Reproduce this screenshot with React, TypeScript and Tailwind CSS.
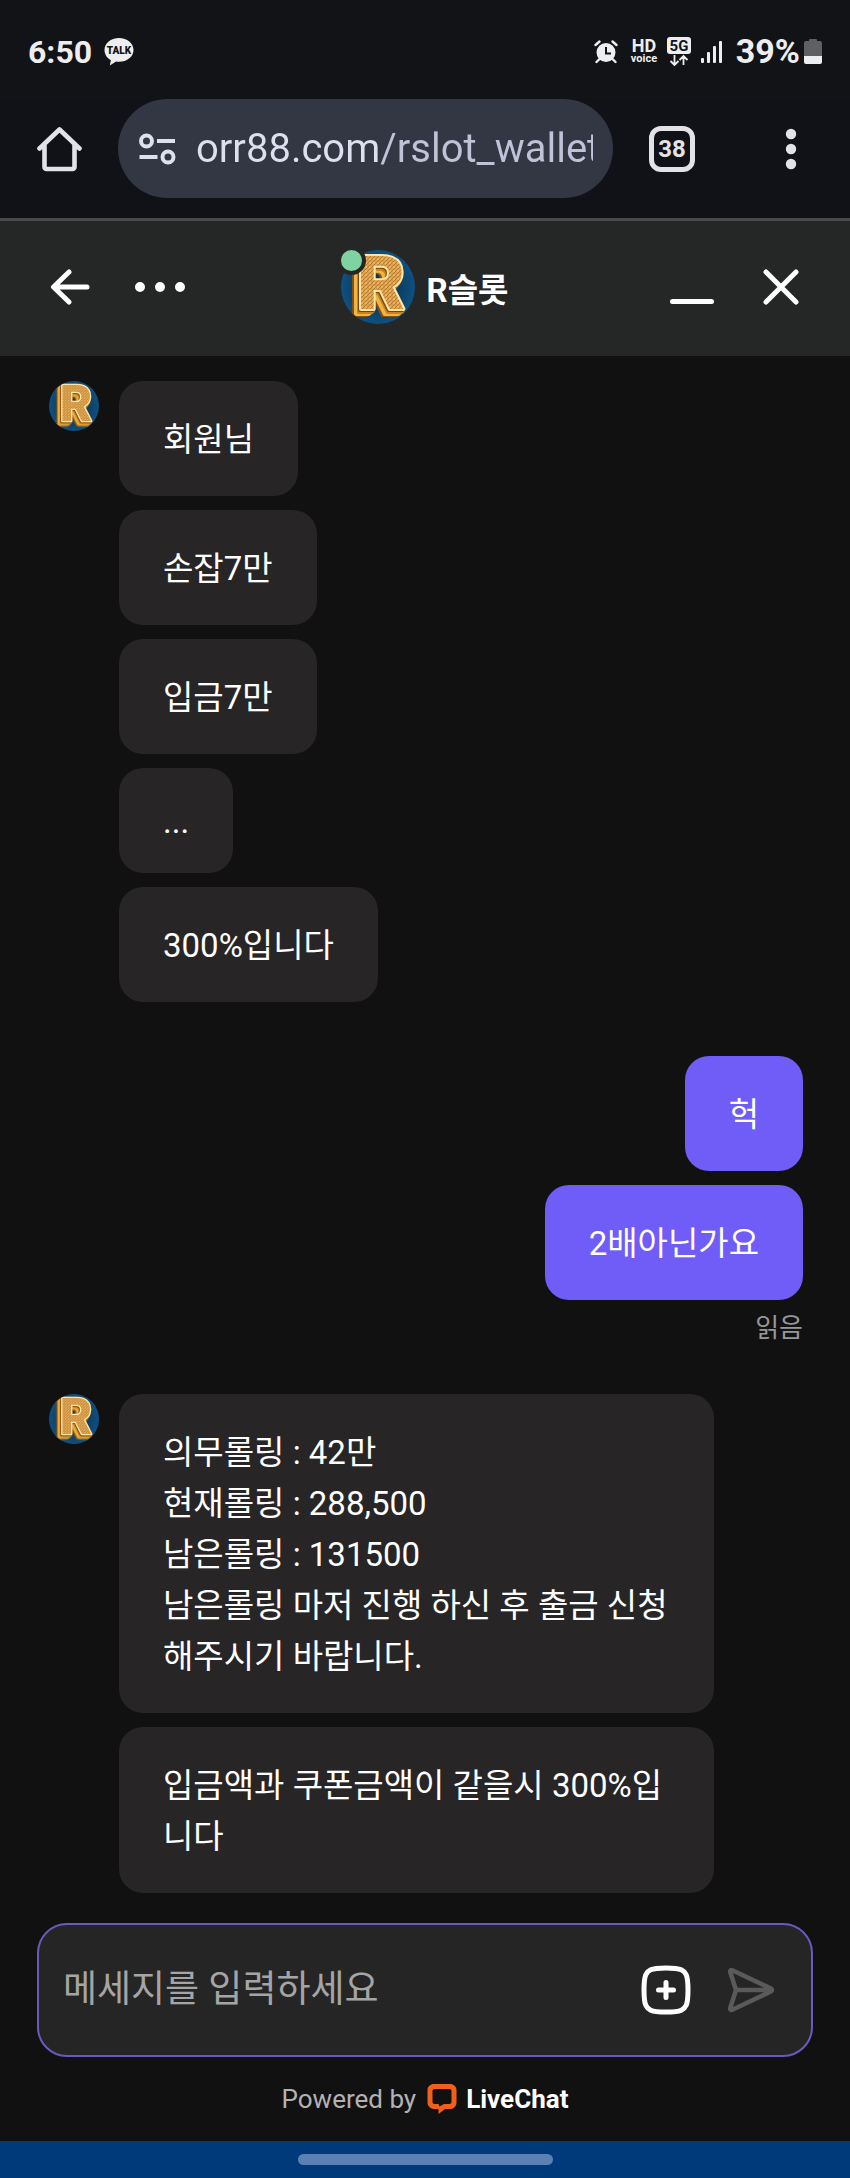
import { ReactNode, useId } from 'react'
import clsx from 'clsx'

type ChatMessage = { id: number; text: string }

const greetingMessages: ChatMessage[] = [
  { id: 1, text: '회원님' },
  { id: 2, text: '손잡7만' },
  { id: 3, text: '입금7만' },
  { id: 4, text: '...' },
  { id: 5, text: '300%입니다' },
]

const visitorMessages: ChatMessage[] = [
  { id: 6, text: '헉' },
  { id: 7, text: '2배아닌가요' },
]

const rollingMessages: ChatMessage[] = [
  {
    id: 8,
    text: '의무롤링 : 42만\n현재롤링 : 288,500\n남은롤링 : 131500\n남은롤링 마저 진행 하신 후 출금 신청해주시기 바랍니다.',
  },
  { id: 9, text: '입금액과 쿠폰금액이 같을시 300%입니다' },
]

export default function App() {
  return (
    <div className="flex min-h-screen flex-col bg-[#121112] font-['Roboto','Noto_Sans_CJK_KR',sans-serif] text-white">
      <StatusBar />
      <BrowserBar />
      <ChatHeader />
      <main className="flex-1 pt-[25px]">
        <AgentGroup messages={greetingMessages} />
        <VisitorGroup messages={visitorMessages} />
        <AgentGroup messages={rollingMessages} />
      </main>
      <Composer />
      <PoweredBy />
      <div className="flex h-[37px] items-center justify-center bg-[#003a7a]">
        <div className="h-[11px] w-[30%] rounded-full bg-[#5b80b4]" />
      </div>
    </div>
  )
}

function StatusBar() {
  return (
    <div className="flex h-[99px] items-center justify-between bg-[#111317] pt-1 pr-7 pl-7 text-[32px] font-bold text-[#eeeef0]">
      <div className="flex items-center gap-3">
        <span>6:50</span>
        <svg className="h-7 w-[30px]" viewBox="0 0 30 28">
          <path
            fill="#eeeef0"
            d="M15 0C6.800 0 .500 5.400.500 12c0 4.300 2.500 8 6.400 10.200L5.800 27.600l6.300-4c1 .2 1.900.2 2.900.2 8.200 0 14.500-5.200 14.500-11.800S23.200 0 15 0Z"
          />
          <text
            x="15"
            y="16"
            textAnchor="middle"
            className="text-[10px] font-black"
            fill="#111317"
          >
            TALK
          </text>
        </svg>
      </div>
      <div className="flex items-center">
        <AlarmIcon />
        <svg className="ml-3 h-9 w-7" viewBox="0 0 28 36" fill="#eeeef0">
          <text x="14" y="18" textAnchor="middle" className="text-[18px]">
            HD
          </text>
          <text x="14" y="28" textAnchor="middle" className="text-[11px]">
            voice
          </text>
        </svg>
        <NetworkIcon />
        <svg className="ml-2 h-6 w-6" viewBox="0 0 24 24" fill="#eeeef0">
          <rect x="1" y="18" width="3" height="5" rx="1" />
          <rect x="7" y="12" width="3" height="11" rx="1" />
          <rect x="13" y="6" width="3" height="17" rx="1" />
          <rect x="19" y="1" width="3" height="22" rx="1" />
        </svg>
        <span className="ml-3 text-[34px]">39%</span>
        <svg className="ml-1 h-[26px] w-[18px]" viewBox="0 0 18 26">
          <path
            fill="#5f6063"
            d="M5 1a1 1 0 0 1 1-1h6a1 1 0 0 1 1 1v1h3a2 2 0 0 1 2 2v14H0V4a2 2 0 0 1 2-2h3Z"
          />
          <path fill="#eeeef0" d="M0 17h18v6a2 2 0 0 1-2 2H2a2 2 0 0 1-2-2Z" />
        </svg>
      </div>
    </div>
  )
}

function AlarmIcon() {
  return (
    <svg className="h-6 w-6" viewBox="0 0 24 24" fill="none">
      <circle cx="12" cy="12.500" r="9.500" fill="#eeeef0" />
      <path
        d="M5.500 19 2.500 22M18.500 19l3 3M1.500 5l4-3.500M22.500 5l-4-3.500"
        stroke="#eeeef0"
        strokeWidth="2.400"
        strokeLinecap="round"
      />
      <path d="M12 7v6.500h5" stroke="#111317" strokeWidth="2" />
    </svg>
  )
}

function NetworkIcon() {
  return (
    <svg className="ml-2 h-[30px] w-[26px]" viewBox="0 0 26 30">
      <rect x="1" y="0" width="24" height="17" rx="3" fill="#eeeef0" />
      <text
        x="13"
        y="14"
        textAnchor="middle"
        className="text-[15px]"
        fill="#111317"
      >
        5G
      </text>
      <path
        d="M8.500 18v10m-4-4 4 4 4-4M17.500 28v-9m-4 4 4-4 4 4"
        fill="none"
        stroke="#eeeef0"
        strokeWidth="1.800"
      />
    </svg>
  )
}

function BrowserBar() {
  return (
    <div className="flex items-center bg-[#111217] pr-[47px] pb-5 pl-9">
      <button type="button" aria-label="Home">
        <svg className="size-[46px]" viewBox="0 0 46 46" fill="none">
          <path
            d="M3.500 22.500 23.500 3.500l20 19M8.500 19v22a2 2 0 0 0 2 2h26a2 2 0 0 0 2-2V19"
            stroke="#e3e3e7"
            strokeWidth="4.600"
            strokeLinecap="round"
            strokeLinejoin="round"
          />
        </svg>
      </button>
      <div className="ml-9 flex h-[99px] min-w-0 flex-1 items-center rounded-full bg-[#333743] pr-5 pl-5">
        <button type="button" aria-label="Site settings">
          <svg
            className="h-8 w-[38px]"
            viewBox="0 0 38 32"
            fill="none"
            stroke="#dde0ef"
            strokeWidth="4"
          >
            <circle cx="8.500" cy="8" r="5.500" />
            <circle cx="30" cy="24" r="5.500" />
            <path d="M19 8h18M1.500 24h18" />
          </svg>
        </button>
        <input
          type="text"
          aria-label="Address"
          defaultValue="orr88.com/rslot_wallet"
          className="ml-5 min-w-0 flex-1 bg-linear-[90deg,#dde0ef_184px,#bfc3d8_184px] bg-clip-text text-[40px] text-transparent outline-none"
        />
      </div>
      <button
        type="button"
        aria-label="Tabs"
        className="ml-9 flex size-[46px] items-center justify-center rounded-xl border-[5px] border-[#e3e3e7] text-2xl font-bold text-[#e3e3e7]"
      >
        38
      </button>
      <button type="button" aria-label="Menu" className="ml-[84px]">
        <svg className="h-[42px] w-6" viewBox="0 0 24 42" fill="#e3e3e7">
          <circle cx="12" cy="6" r="5.200" />
          <circle cx="12" cy="21" r="5.200" />
          <circle cx="12" cy="36" r="5.200" />
        </svg>
      </button>
    </div>
  )
}

function ChatHeader() {
  return (
    <header className="flex h-[138px] items-center border-t-[3px] border-[#484a4c] bg-[#252626] pr-[51px] pb-1 pl-[50px]">
      <div className="flex flex-1 items-center gap-11">
        <HeaderButton label="뒤로">
          <svg className="h-9 w-10" viewBox="0 0 40 36">
            <path d="M37 18H4M19 3 3.500 18 19 33" />
          </svg>
        </HeaderButton>
        <HeaderButton label="더보기">
          <svg className="h-9 w-[52px]" viewBox="0 0 52 36">
            <path d="M6 18h0M26 18h0M46 18h0" strokeWidth="10" />
          </svg>
        </HeaderButton>
      </div>
      <div className="flex items-center gap-3">
        <div className="relative">
          <Avatar className="size-[74px]" />
          <span className="absolute -top-1 -left-1 size-[29px] rounded-full border-4 border-[#252626] bg-[#7ed3a1]" />
        </div>
        <h1 className="pt-2 text-[33px] font-bold">R슬롯</h1>
      </div>
      <div className="flex flex-1 items-center justify-end gap-12">
        <HeaderButton label="최소화">
          <svg className="h-9 w-[46px]" viewBox="0 0 46 36">
            <path d="M3.500 32.500h39" />
          </svg>
        </HeaderButton>
        <HeaderButton label="닫기">
          <svg className="size-9" viewBox="0 0 36 36">
            <path d="m3 3 30 30M33 3 3 33" />
          </svg>
        </HeaderButton>
      </div>
    </header>
  )
}

function HeaderButton({
  label,
  children,
}: {
  label: string
  children: ReactNode
}) {
  return (
    <button
      type="button"
      aria-label={label}
      className="fill-none stroke-white stroke-5 [stroke-linecap:round] [stroke-linejoin:round]"
    >
      {children}
    </button>
  )
}

function Avatar({ className }: { className: string }) {
  const id = useId()

  return (
    <svg className={clsx('shrink-0', className)} viewBox="0 0 74 74">
      <defs>
        <clipPath id={`${id}-clip`}>
          <circle cx="37" cy="37" r="37" />
        </clipPath>
        <radialGradient id={`${id}-sky`}>
          <stop offset="0" stopColor="#062741" />
          <stop offset="1" stopColor="#0f5080" />
        </radialGradient>
        <pattern
          id={`${id}-face`}
          width="4"
          height="4"
          patternUnits="userSpaceOnUse"
        >
          <rect width="4" height="4" fill="#dba04c" />
          <path d="M0 4 4 0" stroke="#b87a2c" strokeWidth="1" />
          <path d="M0 1h2" stroke="#f3c67a" strokeWidth="1" />
        </pattern>
      </defs>
      <g clipPath={`url(#${id}-clip)`}>
        <rect width="74" height="74" fill={`url(#${id}-sky)`} />
        <text
          x="16"
          y="59"
          fill={`url(#${id}-face)`}
          stroke="#ffe6a6"
          strokeWidth="4"
          strokeLinejoin="round"
          className="text-[74px] font-black [filter:drop-shadow(-1px_1px_0_#7a430c)_drop-shadow(-1px_2px_0_#c98420)_drop-shadow(-3px_2px_0_#edb545)_drop-shadow(-2px_1px_0_#8a4d0c)] [paint-order:stroke]"
        >
          R
        </text>
      </g>
    </svg>
  )
}

function AgentGroup({ messages }: { messages: ChatMessage[] }) {
  return (
    <section className="flex items-start gap-5 pr-[16%] pl-[49px]">
      <Avatar className="size-[50px]" />
      <ul className="flex min-w-0 flex-1 flex-col items-start gap-[14px]">
        {messages.map((message) => (
          <Bubble key={message.id} text={message.text} />
        ))}
      </ul>
    </section>
  )
}

function VisitorGroup({ messages }: { messages: ChatMessage[] }) {
  return (
    <section className="flex flex-col items-end pt-[54px] pr-[47px] pb-12 pl-[16%]">
      <ul className="flex flex-col items-end gap-[14px]">
        {messages.map((message) => (
          <Bubble key={message.id} text={message.text} isOwn />
        ))}
      </ul>
      <p className="mt-[10px] text-[26px] leading-9 text-[#97969a]">읽음</p>
    </section>
  )
}

function Bubble({ text, isOwn = false }: { text: string; isOwn?: boolean }) {
  const isShort = text === '...'

  return (
    <li
      className={clsx(
        'rounded-3xl px-11 pt-[33px] pb-[31px] text-[33px] whitespace-pre-line',
        isShort ? 'leading-[41px]' : 'leading-[51px]',
        isOwn ? 'bg-[#705cf6]' : 'bg-[#272526]'
      )}
    >
      {text}
    </li>
  )
}

function Composer() {
  return (
    <form
      className="mx-[37px] mt-[30px] flex h-[134px] items-center rounded-[30px] border-2 border-[#6c59bd] bg-[#252525] pr-9 pl-6"
      onSubmit={(event) => event.preventDefault()}
    >
      <input
        type="text"
        aria-label="메세지를 입력하세요"
        placeholder="메세지를 입력하세요"
        className="min-w-0 flex-1 text-[37px] outline-none placeholder:text-[#a5a5a5]"
      />
      <button type="button" aria-label="첨부">
        <svg
          className="size-[50px]"
          viewBox="0 0 50 50"
          fill="none"
          stroke="#fff"
          strokeWidth="5"
          strokeLinecap="round"
        >
          <path d="M25 3c7 0 12 .3 15.300 1.800 2.200 1 3.900 2.700 4.900 4.900C46.700 13 47 18 47 25s-.3 12-1.800 15.300c-1 2.200-2.700 3.900-4.900 4.900C37 46.700 32 47 25 47s-12-.3-15.300-1.800c-2.200-1-3.900-2.700-4.900-4.900C3.300 37 3 32 3 25s.3-12 1.800-15.300c1-2.200 2.700-3.900 4.900-4.900C13 3.300 18 3 25 3Z" />
          <path d="M25 17.500v15M17.500 25h15" />
        </svg>
      </button>
      <button type="submit" aria-label="보내기" className="ml-9">
        <svg
          className="h-[46px] w-12"
          viewBox="0 0 48 46"
          fill="none"
          stroke="#5a5a5b"
          strokeWidth="4.500"
          strokeLinecap="round"
          strokeLinejoin="round"
        >
          <path d="M3.300 5.200c-.6-1.600.6-2.600 2-1.900L44 21.500c1.400.7 1.400 2.300 0 3L5.300 42.700c-1.400.7-2.600-.3-2-1.900L9 23ZM9 23h34" />
        </svg>
      </button>
    </form>
  )
}

function PoweredBy() {
  return (
    <footer className="flex h-[84px] items-center justify-center text-[26px] text-[#b3b2b2]">
      <span>Powered by</span>
      <a href="#livechat" className="ml-[10px] flex items-center gap-2 text-white">
        <svg className="h-[30px] w-8" viewBox="0 0 32 30">
          <path
            fill="#f0601a"
            fillRule="evenodd"
            d="M8 0h16c3.500 0 6.500 2.500 6.500 6v12.500c0 3.500-2.500 6.500-6 6.500h-5.500L12.500 30v-5H8c-3.500 0-6.500-3-6.500-6.500V6c0-3.500 3-6 6.500-6Zm.500 5c-1.200 0-2 .8-2 2v11c0 1.200.8 2 2 2h4l1 2.500L18 20h5.500c1.200 0 2-.8 2-2V7c0-1.200-.8-2-2-2Z"
          />
        </svg>
        <span className="font-bold">LiveChat</span>
      </a>
    </footer>
  )
}
